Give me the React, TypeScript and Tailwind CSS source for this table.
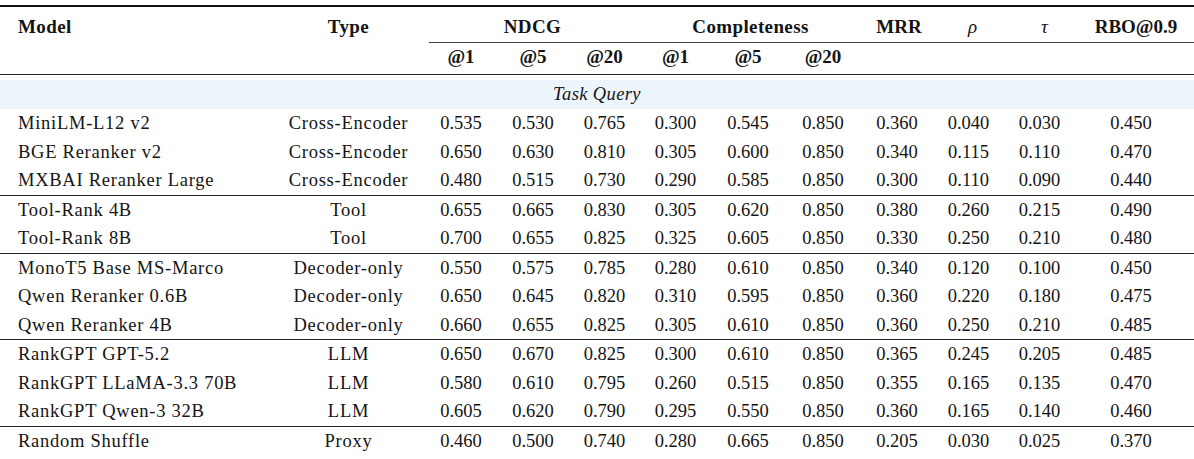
const cols =
  'grid grid-cols-[272px_153px_72px_72px_71px_71px_74px_76px_72px_71px_71px_112px]';

type Row = { model: string; type: string; vals: string[] };

const groups: Row[][] = [
  [
    { model: 'MiniLM-L12 v2', type: 'Cross-Encoder', vals: ['0.535', '0.530', '0.765', '0.300', '0.545', '0.850', '0.360', '0.040', '0.030', '0.450'] },
    { model: 'BGE Reranker v2', type: 'Cross-Encoder', vals: ['0.650', '0.630', '0.810', '0.305', '0.600', '0.850', '0.340', '0.115', '0.110', '0.470'] },
    { model: 'MXBAI Reranker Large', type: 'Cross-Encoder', vals: ['0.480', '0.515', '0.730', '0.290', '0.585', '0.850', '0.300', '0.110', '0.090', '0.440'] },
  ],
  [
    { model: 'Tool-Rank 4B', type: 'Tool', vals: ['0.655', '0.665', '0.830', '0.305', '0.620', '0.850', '0.380', '0.260', '0.215', '0.490'] },
    { model: 'Tool-Rank 8B', type: 'Tool', vals: ['0.700', '0.655', '0.825', '0.325', '0.605', '0.850', '0.330', '0.250', '0.210', '0.480'] },
  ],
  [
    { model: 'MonoT5 Base MS-Marco', type: 'Decoder-only', vals: ['0.550', '0.575', '0.785', '0.280', '0.610', '0.850', '0.340', '0.120', '0.100', '0.450'] },
    { model: 'Qwen Reranker 0.6B', type: 'Decoder-only', vals: ['0.650', '0.645', '0.820', '0.310', '0.595', '0.850', '0.360', '0.220', '0.180', '0.475'] },
    { model: 'Qwen Reranker 4B', type: 'Decoder-only', vals: ['0.660', '0.655', '0.825', '0.305', '0.610', '0.850', '0.360', '0.250', '0.210', '0.485'] },
  ],
  [
    { model: 'RankGPT GPT-5.2', type: 'LLM', vals: ['0.650', '0.670', '0.825', '0.300', '0.610', '0.850', '0.365', '0.245', '0.205', '0.485'] },
    { model: 'RankGPT LLaMA-3.3 70B', type: 'LLM', vals: ['0.580', '0.610', '0.795', '0.260', '0.515', '0.850', '0.355', '0.165', '0.135', '0.470'] },
    { model: 'RankGPT Qwen-3 32B', type: 'LLM', vals: ['0.605', '0.620', '0.790', '0.295', '0.550', '0.850', '0.360', '0.165', '0.140', '0.460'] },
  ],
  [
    { model: 'Random Shuffle', type: 'Proxy', vals: ['0.460', '0.500', '0.740', '0.280', '0.665', '0.850', '0.205', '0.030', '0.025', '0.370'] },
  ],
];

function DataRow({ row }: { row: Row }) {
  return (
    <div className={`${cols} h-[28.5px] items-center`}>
      <div className="pl-[18px] tracking-[0.04em] whitespace-nowrap">{row.model}</div>
      <div className="text-center tracking-[0.04em] whitespace-nowrap">{row.type}</div>
      {row.vals.map((v, i) => (
        <div key={i} className="text-center">
          {v}
        </div>
      ))}
    </div>
  );
}

export default function App() {
  return (
    <div className="w-[1194px] h-[459px] bg-white pt-[5px] font-['Liberation_Serif',serif] text-[18.5px] leading-none text-[#141414] overflow-hidden">
      <div className="h-[1.5px] bg-[#111]" />

      {/* header, first line */}
      <div className={`${cols} h-[35px] pt-[4px] items-center font-bold text-[19px]`}>
        <div className="pl-[18px] tracking-[0.02em]">Model</div>
        <div className="text-center tracking-[0.02em]">Type</div>
        <div className="col-span-3 text-center tracking-[0.02em]">NDCG</div>
        <div className="col-span-3 text-center tracking-[0.02em]">Completeness</div>
        <div className="pl-[4px] text-center">MRR</div>
        <div className="pl-[8px] text-center font-normal italic">ρ</div>
        <div className="pl-[10px] text-center font-normal italic">τ</div>
        <div className="pl-[10px] text-center">RBO@0.9</div>
      </div>

      <div className="ml-[429px] h-px bg-[#444]" />

      {/* header, second line */}
      <div className={`${cols} h-[31px] pb-[4px] items-center font-bold text-[19px]`}>
        <div />
        <div />
        {['@1', '@5', '@20', '@1', '@5', '@20'].map((h, i) => (
          <div key={i} className="text-center">
            {h}
          </div>
        ))}
      </div>

      <div className="h-px bg-[#222]" />

      <div className="mt-[5.5px] h-[29px] bg-[#edf5fc] flex items-center justify-center italic tracking-[0.02em]">
        Task Query
      </div>

      {groups.map((g, gi) => (
        <div key={gi}>
          {gi > 0 && <div className="h-px bg-[#222]" />}
          {g.map((r) => (
            <DataRow key={r.model} row={r} />
          ))}
        </div>
      ))}
    </div>
  );
}
